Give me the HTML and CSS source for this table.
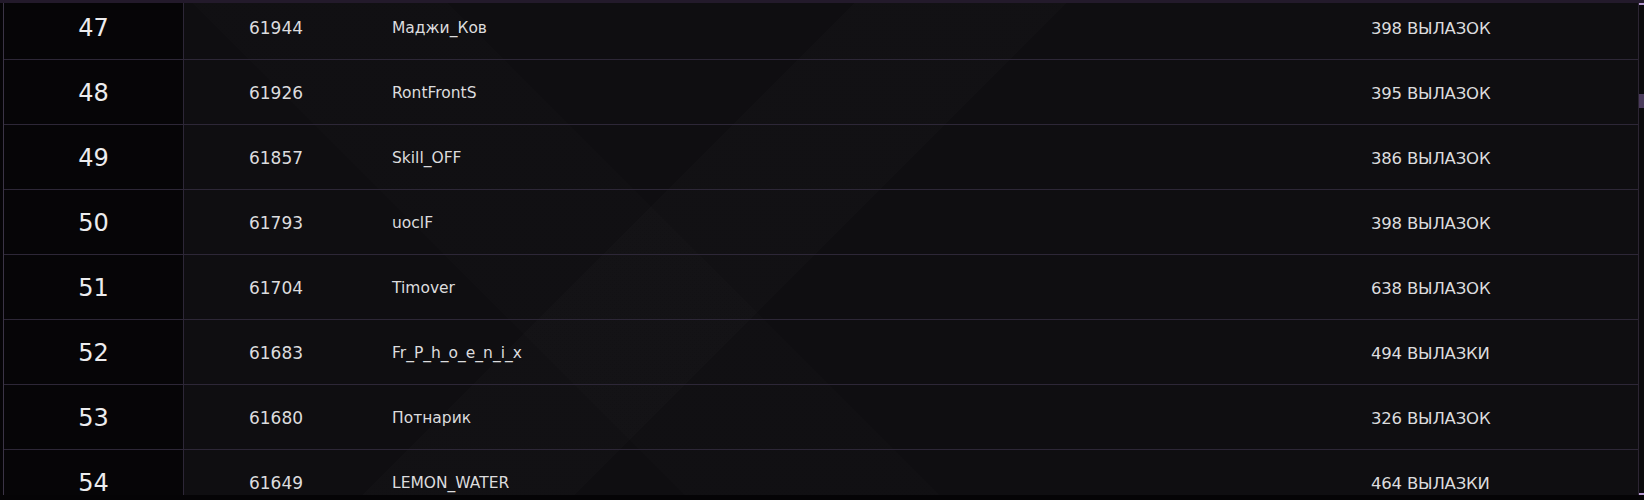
FILE: index.html
```html
<!DOCTYPE html>
<html lang="ru">
<head>
<meta charset="utf-8">
<title>Рейтинг</title>
<link rel="stylesheet" href="styles.css">
</head>
<body>
<div class="topbar"></div>
<div class="frame">
  <div class="board">
    <div class="rows">
      <div class="row"><div class="rank">47</div><div class="score">61944</div><div class="name">Маджи_Ков</div><div class="sorties">398 ВЫЛАЗОК</div></div>
      <div class="row"><div class="rank">48</div><div class="score">61926</div><div class="name">RontFrontS</div><div class="sorties">395 ВЫЛАЗОК</div></div>
      <div class="row"><div class="rank">49</div><div class="score">61857</div><div class="name">Skill_OFF</div><div class="sorties">386 ВЫЛАЗОК</div></div>
      <div class="row"><div class="rank">50</div><div class="score">61793</div><div class="name">uoclF</div><div class="sorties">398 ВЫЛАЗОК</div></div>
      <div class="row"><div class="rank">51</div><div class="score">61704</div><div class="name">Timover</div><div class="sorties">638 ВЫЛАЗОК</div></div>
      <div class="row"><div class="rank">52</div><div class="score">61683</div><div class="name">Fr_P_h_o_e_n_i_x</div><div class="sorties">494 ВЫЛАЗКИ</div></div>
      <div class="row"><div class="rank">53</div><div class="score">61680</div><div class="name">Потнарик</div><div class="sorties">326 ВЫЛАЗОК</div></div>
      <div class="row"><div class="rank">54</div><div class="score">61649</div><div class="name">LEMON_WATER</div><div class="sorties">464 ВЫЛАЗКИ</div></div>
    </div>
  </div>
  <div class="scrollbar">
    <div class="cap cap-top"></div>
    <div class="thumb"></div>
    <div class="cap cap-bottom"></div>
  </div>
</div>
</body>
</html>
```
FILE: styles.css
```css
* { box-sizing: border-box; }
html, body { margin: 0; padding: 0; }
body {
  width: 1644px;
  height: 500px;
  overflow: hidden;
  background: #050406;
  font-family: "DejaVu Sans", "Liberation Sans", sans-serif;
  color: #dcdcde;
}
.topbar {
  height: 3px;
  background: #231a2b;
}
.frame {
  display: flex;
  height: 492px;
  margin-left: 3px;
}
.board {
  flex: 1;
  overflow: hidden;
  border-left: 1px solid #3b3446;
  border-right: 1px solid #2c2533;
  background:
    linear-gradient(135deg, rgba(255,255,255,0) 0 40%, rgba(255,255,255,0.01) 40% 50%, rgba(255,255,255,0) 50% 100%),
    linear-gradient(45deg, rgba(255,255,255,0) 0 32%, rgba(255,255,255,0.008) 32% 44%, rgba(255,255,255,0) 44% 100%),
    #0f0e11;
}
.rows {
  margin-top: -8px;
}
.row {
  display: grid;
  grid-template-columns: 180px 184px 1fr 267px;
  height: 65px;
  border-bottom: 1px solid #2d2737;
  align-items: center;
  font-size: 17px;
}
.rank {
  height: 100%;
  display: flex;
  align-items: center;
  justify-content: center;
  font-size: 24px;
  color: #ececee;
  background: #060507;
  border-right: 1px solid #2d2737;
  padding-top: 2px;
}
.score {
  text-align: center;
  padding-top: 2px;
}
.name {
  padding-left: 24px;
  padding-top: 2px;
  font-size: 15.5px;
}
.sorties {
  padding-top: 2px;
  font-size: 16.5px;
  letter-spacing: -0.2px;
}
.scrollbar {
  width: 5px;
  display: flex;
  flex-direction: column;
  background: #0b0a0d;
}
.cap {
  height: 2px;
  background: #b59ad0;
}
.thumb {
  height: 14px;
  margin-top: 89px;
  background: #4a3b5c;
}
.cap-bottom {
  margin-top: auto;
}
```
